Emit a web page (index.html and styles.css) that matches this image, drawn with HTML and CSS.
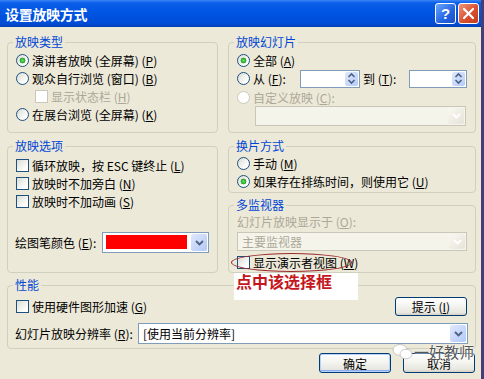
FILE: index.html
```html
<!DOCTYPE html>
<html lang="zh-CN">
<head>
    <meta charset="UTF-8">
    <title>设置放映方式</title>
    <link rel="stylesheet" href="styles.css">
</head>
<body>
<div class="dialog">
    <div class="titlebar">
        <span class="title">设置放映方式</span>
        <span class="tb-btn help">?</span>
        <span class="tb-btn close">
            <svg viewBox="0 0 19 19" width="19" height="19"><path d="M5 5 L14 14 M14 5 L5 14" stroke="#fff" stroke-width="2.2" stroke-linecap="round"/></svg>
        </span>
    </div>

    <div class="content">
        <div class="grid">
            <fieldset class="group g-type">
                <legend>放映类型</legend>
                <div class="row"><span class="radio on"></span>演讲者放映 (全屏幕) (<u>P</u>)</div>
                <div class="row"><span class="radio"></span>观众自行浏览 (窗口) (<u>B</u>)</div>
                <div class="row indent off"><span class="check"></span>显示状态栏 (<u>H</u>)</div>
                <div class="row"><span class="radio"></span>在展台浏览 (全屏幕) (<u>K</u>)</div>
            </fieldset>

            <fieldset class="group g-slides">
                <legend>放映幻灯片</legend>
                <div class="row"><span class="radio on"></span>全部 (<u>A</u>)</div>
                <div class="row spin-row">
                    <span class="radio"></span><span class="from">从 (<u>F</u>):</span>
                    <span class="spin"><span class="spin-btn"><svg viewBox="0 0 9 13" width="9" height="13"><path d="M1.5 5 L4.5 2 L7.5 5 M1.5 8 L4.5 11 L7.5 8" fill="none" stroke="#4d6185" stroke-width="1.6"/></svg></span></span>
                    <span class="to">到 (<u>T</u>):</span>
                    <span class="spin short"><span class="spin-btn"><svg viewBox="0 0 9 13" width="9" height="13"><path d="M1.5 5 L4.5 2 L7.5 5 M1.5 8 L4.5 11 L7.5 8" fill="none" stroke="#4d6185" stroke-width="1.6"/></svg></span></span>
                </div>
                <div class="row off"><span class="radio"></span>自定义放映 (<u>C</u>):</div>
                <div class="combo disabled custom-combo">
                    <span class="value"></span>
                    <span class="drop"><svg viewBox="0 0 9 6" width="9" height="6"><path d="M1 1 L4.5 4.5 L8 1" fill="none" stroke="#fff" stroke-width="1.8"/></svg></span>
                </div>
            </fieldset>

            <fieldset class="group g-options">
                <legend>放映选项</legend>
                <div class="row"><span class="check"></span>循环放映，按 ESC 键终止 (<u>L</u>)</div>
                <div class="row"><span class="check"></span>放映时不加旁白 (<u>N</u>)</div>
                <div class="row"><span class="check"></span>放映时不加动画 (<u>S</u>)</div>
                <div class="pen-row">
                    <span>绘图笔颜色 (<u>E</u>):</span>
                    <div class="combo pen-combo">
                        <span class="swatch"></span>
                        <span class="drop"><svg viewBox="0 0 9 6" width="9" height="6"><path d="M1 1 L4.5 4.5 L8 1" fill="none" stroke="#4d6185" stroke-width="1.8"/></svg></span>
                    </div>
                </div>
            </fieldset>

            <div class="stack">
                <fieldset class="group g-advance">
                    <legend>换片方式</legend>
                    <div class="row"><span class="radio"></span>手动 (<u>M</u>)</div>
                    <div class="row"><span class="radio on"></span>如果存在排练时间，则使用它 (<u>U</u>)</div>
                </fieldset>
                <fieldset class="group g-monitor">
                    <legend>多监视器</legend>
                    <div class="row off">幻灯片放映显示于 (<u>O</u>):</div>
                    <div class="combo disabled monitor-combo">
                        <span class="value">主要监视器</span>
                        <span class="drop"><svg viewBox="0 0 9 6" width="9" height="6"><path d="M1 1 L4.5 4.5 L8 1" fill="none" stroke="#fff" stroke-width="1.8"/></svg></span>
                    </div>
                    <div class="row presenter"><span class="check"></span>显示演示者视图 (<u>W</u>)</div>
                </fieldset>
            </div>
        </div>

        <fieldset class="group g-perf">
            <legend>性能</legend>
            <div class="perf-row">
                <div class="row"><span class="check"></span>使用硬件图形加速 (<u>G</u>)</div>
                <button class="btn">提示 (<u>I</u>)</button>
            </div>
            <div class="res-row">
                <span>幻灯片放映分辨率 (<u>R</u>):</span>
                <div class="combo res-combo">
                    <span class="value">[使用当前分辨率]</span>
                    <span class="drop"><svg viewBox="0 0 9 6" width="9" height="6"><path d="M1 1 L4.5 4.5 L8 1" fill="none" stroke="#4d6185" stroke-width="1.8"/></svg></span>
                </div>
            </div>
        </fieldset>

        <div class="actions">
            <button class="btn default">确定</button>
            <button class="btn">取消</button>
        </div>
    </div>

    <!-- 标注 -->
    <span class="callout-ring"></span>
    <span class="callout-text">点中该选择框</span>

    <div class="watermark">
        <svg viewBox="0 0 22 18" width="22" height="18">
            <ellipse cx="8" cy="7" rx="7" ry="5.5" fill="#fff" stroke="#bbb" stroke-width="0.8"/>
            <ellipse cx="14" cy="11" rx="6" ry="4.8" fill="#fff" stroke="#bbb" stroke-width="0.8"/>
        </svg>
        <span>一好教师</span>
    </div>
</div>
</body>
</html>
```

FILE: styles.css
```css
* { box-sizing: border-box; }
body { margin: 0; background: #ece9d8; font-family: "Noto Sans CJK SC", "Noto Sans", sans-serif; font-size: 12px; color: #000; }
u { text-decoration: underline; }

.dialog { position: relative; width: 484px; height: 379px; overflow: hidden; background: #ece9d8; border-right: 3px solid #463e74; }

/* 标题栏 */
.titlebar { height: 27px; display: flex; align-items: center; padding: 0 2px 0 5px;
    background: linear-gradient(#3a86f5 0, #0a5ee8 3px, #0055e3 45%, #004dd8 85%, #0040b8 100%); }
.title { flex: 1; color: #fff; font-weight: bold; font-size: 14px; letter-spacing: -0.3px; }
.tb-btn { width: 21px; height: 21px; margin-left: 2px; border: 1px solid #fff; border-radius: 3px;
    display: flex; align-items: center; justify-content: center; }
.help { background: linear-gradient(135deg, #6aa6ff, #2463e0 60%, #1a4fc8); color: #fff; font: bold 15px "Liberation Sans", sans-serif; }
.close { background: linear-gradient(135deg, #f0967a, #d9502f 55%, #c23c1e); }

.content { padding: 8px 5px 0 7px; }
.grid { display: grid; grid-template-columns: 211px 248px; column-gap: 10px; row-gap: 6px; }
.stack { display: flex; flex-direction: column; gap: 5px; }

/* 分组框 */
.group { margin: 0; min-width: 0; border: 1px solid #d0d0bf; border-radius: 4px; padding: 2px 8px 6px; }
.group legend { padding: 0 2px; margin-left: -3px; color: #0046d5; line-height: 14px; }
.g-type { padding-bottom: 8px; }
.g-options { padding-top: 3px; padding-bottom: 0; }
.g-advance { padding: 1px 8px 2px; }
.g-monitor { flex: 1; padding: 0 8px 1px; }
.g-perf { margin-top: 5px; padding: 5px 8px 4px; }

.row { display: flex; align-items: center; height: 18px; white-space: nowrap; }
.indent { padding-left: 19px; }
.off { color: #aca899; }

.radio, .check { flex: none; width: 13px; height: 13px; margin-right: 3px; border: 1px solid #1c5180;
    background: linear-gradient(135deg, #dcdcd3, #fff 80%); }
.radio { border-radius: 50%; }
.radio.on { background: radial-gradient(circle, #6ee36e 0, #21a121 2.6px, transparent 3.2px), linear-gradient(135deg, #dcdcd3, #fff 80%); }
.off .radio, .off .check { border-color: #cac8bb; background: #fff; }

/* 数字框 */
.spin-row { height: 19px; }
.from { width: 47px; }
.to { width: 46px; margin-left: 3px; }
.spin { display: flex; justify-content: flex-end; width: 60px; height: 18px; padding: 1px; border: 1px solid #7f9db9; background: #fff; }
.spin.short { width: 58px; }
.spin-btn { width: 13px; display: flex; align-items: center; justify-content: center; border-radius: 2px;
    background: linear-gradient(135deg, #e0e9fd, #b5cbf7); }

/* 下拉框 */
.combo { display: flex; align-items: center; height: 21px; padding: 1px; border: 1px solid #7f9db9; background: #fff; }
.combo .value { flex: 1; padding-left: 3px; white-space: nowrap; }
.drop { width: 16px; align-self: stretch; display: flex; align-items: center; justify-content: center; border-radius: 2px;
    background: linear-gradient(135deg, #e0e9fd, #b2c8f6); }
.combo.disabled { border-color: #c9c7ba; background: #f5f4ea; color: #aca899; }
.combo.disabled .drop { background: linear-gradient(135deg, #f8f7f2, #e6e4d8); }
.custom-combo { width: 211px; height: 20px; margin-left: 18px; }
.monitor-combo { width: 230px; height: 19px; margin-top: 2px; }
.presenter { margin-top: 2px; }

.pen-row { display: flex; align-items: center; justify-content: space-between; margin-top: 22px; margin-left: -1px; white-space: nowrap; }
.pen-combo { width: 107px; }
.swatch { flex: 1; align-self: stretch; margin: 1px 4px 2px 2px; background: #f00; }

.perf-row { display: flex; align-items: center; justify-content: space-between; height: 19px; }
.res-row { display: flex; align-items: center; justify-content: space-between; margin-top: 7px; margin-left: -1px; white-space: nowrap; }
.res-combo { width: 330px; margin-right: -1px; }

/* 按钮 */
.btn { width: 72px; height: 19px; padding: 0; border: 1px solid #003c74; border-radius: 3px; font: inherit; color: #000;
    background: linear-gradient(#fff, #f4f4f0 45%, #e8e7e0 85%, #d6d0c5); display: flex; align-items: center; justify-content: center; }
.btn.default { box-shadow: inset 0 0 0 1px #b9d1fa, inset 0 -1px 0 1px #89adf0; }
.actions { display: flex; justify-content: flex-end; gap: 12px; margin-top: 4px; padding-right: 1px; }
.actions .btn { height: 20px; }

/* 标注 */
.callout-ring { position: absolute; left: 231px; top: 253px; width: 121px; height: 19px; border: 1px solid #9b2a2a; border-radius: 50%; }
.callout-text { position: absolute; left: 234px; top: 273px; width: 124px; height: 27px; padding-left: 2px; background: #fff;
    color: #c4161c; font-weight: bold; font-size: 16px; line-height: 16px; }

.watermark { position: absolute; left: 392px; top: 341px; display: flex; align-items: center; color: #555; font-size: 15px;
    text-shadow: 0 0 2px #fff, 0 0 2px #fff; }
```
